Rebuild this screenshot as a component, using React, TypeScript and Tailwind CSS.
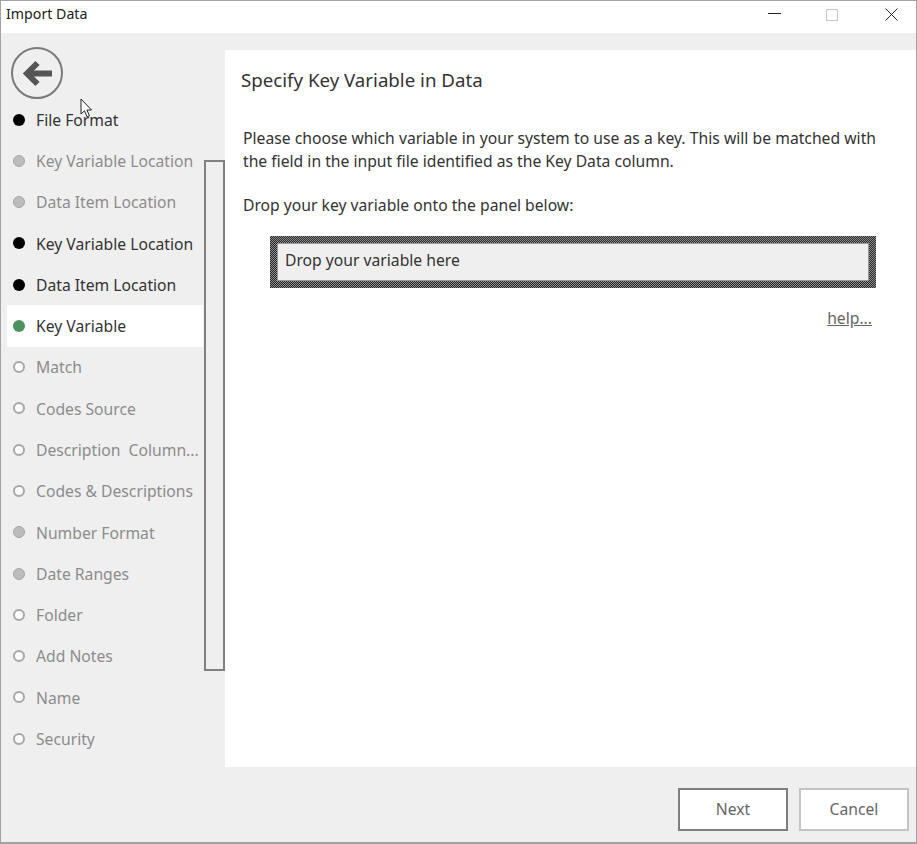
const steps: [string, string][] = [
  ["File Format", "black"],
  ["Key Variable Location", "graydone"],
  ["Data Item Location", "graydone"],
  ["Key Variable Location", "black"],
  ["Data Item Location", "black"],
  ["Key Variable", "active"],
  ["Match", "todo"],
  ["Codes Source", "todo"],
  ["Description  Column...", "todo"],
  ["Codes & Descriptions", "todo"],
  ["Number Format", "graydone"],
  ["Date Ranges", "graydone"],
  ["Folder", "todo"],
  ["Add Notes", "todo"],
  ["Name", "todo"],
  ["Security", "todo"],
];

function Dot({ kind }: { kind: string }) {
  if (kind === "black") return <span className="w-3 h-3 rounded-full bg-black" />;
  if (kind === "active") return <span className="w-3 h-3 rounded-full bg-[#4b9460]" />;
  if (kind === "graydone") return <span className="w-3 h-3 rounded-full bg-[#bcbcbc] border border-[#a6a6a6]" />;
  return <span className="w-3 h-3 rounded-full bg-white border-2 border-[#a6a6a6]" />;
}

export default function App() {
  return (
    <div className="relative w-[917px] h-[844px] flex flex-col bg-[#efefef] border border-[#a3a3a3] border-b-2 overflow-hidden font-['Noto_Sans','Open_Sans',sans-serif] text-[#333]">
      <div className="h-[32px] shrink-0 bg-white flex items-center pl-[5px] pb-[7px] relative">
        <span className="text-[14.2px] text-[#222]">Import Data</span>
        <svg className="absolute left-[767px] top-[12px]" width="13" height="3"><rect width="13" height="1" fill="#222" /></svg>
        <span className="absolute left-[825px] top-[8px] w-3 h-3 border border-[#c8c8c8]" />
        <svg className="absolute left-[884px] top-[7px]" width="13" height="13" viewBox="0 0 13 13" stroke="#222" strokeWidth="1" fill="none"><path d="M.5.5l12 12M12.5.5l-12 12" /></svg>
      </div>
      <div className="flex-1 flex min-h-0 pt-[17px]">
        <aside className="w-[224px] shrink-0 relative">
          <div className="pl-[10px] h-[49px]">
            <div className="relative -top-[3px] w-[52px] h-[52px] rounded-full border-2 border-[#7a7a7a] flex items-center justify-center">
              <svg width="30" height="27" viewBox="0 0 30 27" fill="none" stroke="#555" strokeWidth="6"><path d="M30 13.5H5" /><path d="M15.5 3 5 13.5 15.5 24" /></svg>
            </div>
          </div>
          <ul className="pl-[6px] w-[202px]">
            {steps.map(([label, kind], i) => (
              <li
                key={i}
                className={`h-[41.27px] flex items-center gap-[11px] pl-[6px] text-[15.7px] whitespace-pre ${
                  kind === "active" ? "bg-white text-[#333]" : kind === "black" ? "text-[#333]" : "text-[#8c8c8c]"
                }`}
              >
                <Dot kind={kind} />
                <span className="relative top-[1px]">{label}</span>
              </li>
            ))}
          </ul>
          <div className="absolute left-[203px] top-[110px] w-[21px] h-[511px] border-2 border-[#808080]" />
        </aside>
        <main className="flex-1 flex flex-col min-w-0">
          <div className="bg-white h-[717px] pr-[40px] pl-[16px] pt-[16px]">
            <h1 className="text-[18.7px] leading-[28px] text-[#333]">Specify Key Variable in Data</h1>
            <p className="ml-[2px] mt-[33px] text-[15.7px] leading-[23px] text-[#333] text-justify">
              Please choose which variable in your system to use as a key. This will be matched with the field in the input file identified as the Key Data column.
            </p>
            <p className="ml-[2px] mt-[21px] text-[15.7px] leading-[23px] text-[#333]">Drop your key variable onto the panel below:</p>
            <div className="ml-[29px] mt-[19px] h-[52px] p-[7px] bg-[repeating-conic-gradient(#262626_0_25%,#8f8f8f_0_50%)] bg-[length:2px_2px]">
              <div className="h-full bg-[#efefef] border border-[#9a9a9a] flex items-center pl-[7px] pb-[2px] text-[15.7px] text-[#333]">Drop your variable here</div>
            </div>
            <div className="flex justify-end mt-[18px] pr-[4px]">
              <span className="text-[15.7px] leading-[24px] text-[#666] underline">help...</span>
            </div>
          </div>
          <div className="flex-1 flex items-start justify-end gap-[11px] pt-[21px] pr-[7px]">
            <button className="w-[110px] h-[43px] bg-white border-[2px] border-[#7e7e7e] text-[15.7px] text-[#666]">Next</button>
            <button className="w-[110px] h-[43px] bg-white border-[2px] border-[#c4c4c4] text-[15.7px] text-[#666]">Cancel</button>
          </div>
        </main>
      </div>
      <svg className="absolute left-[79px] top-[97px]" width="14" height="21" viewBox="0 0 14 21"><path d="M1 1v15l3.5-3.2 2.6 6 2.4-1-2.6-5.8H11.5z" fill="#fff" stroke="#222" strokeWidth="1" /></svg>
    </div>
  );
}
